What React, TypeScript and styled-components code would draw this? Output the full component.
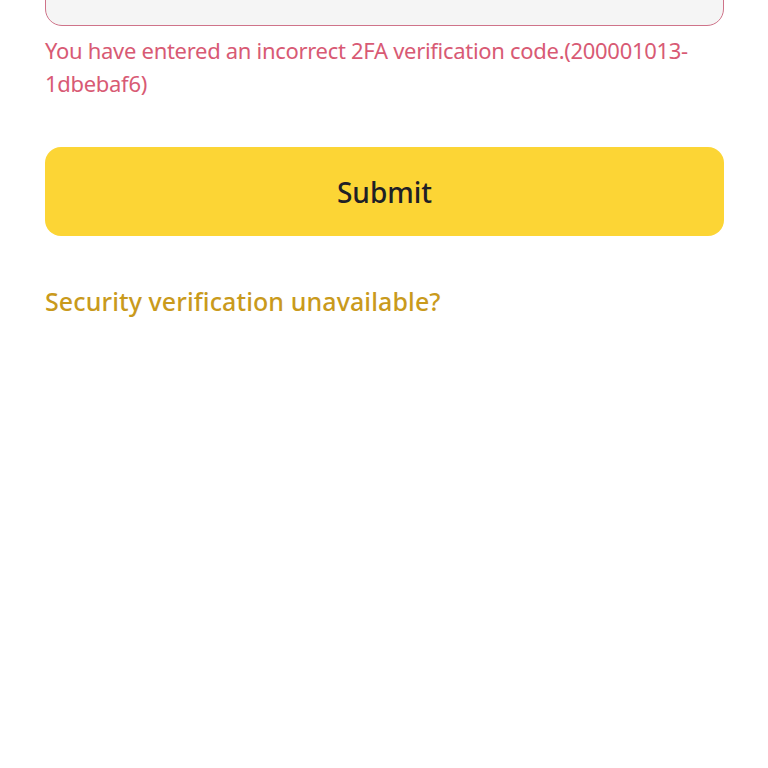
import styled, { createGlobalStyle } from "styled-components";

const GlobalStyle = createGlobalStyle`
  html, body {
    margin: 0;
    padding: 0;
    background: #ffffff;
    overflow: hidden;
  }
  body {
    font-family: "Noto Sans", "Open Sans", sans-serif;
  }
`;

const Page = styled.div`
  width: 768px;
  height: 768px;
  box-sizing: border-box;
  padding: 0 44px 0 45px;
  display: flex;
  flex-direction: column;
`;

const CodeInput = styled.input`
  box-sizing: border-box;
  height: 80px;
  margin-top: -54px;
  width: 100%;
  border: 1.5px solid #cf7389;
  border-radius: 17px;
  background: #f5f5f5;
  outline: none;
  font-family: inherit;
  font-size: 22px;
  padding: 0 20px;
`;

const ErrorText = styled.p`
  margin: 8px 0 0;
  font-size: 22px;
  line-height: 33px;
  color: #d85a74;
  letter-spacing: -0.3px;
`;

const SubmitButton = styled.button`
  margin-top: 47px;
  height: 89px;
  width: 100%;
  border: none;
  border-radius: 16px;
  background: #fcd535;
  color: #1e2026;
  font-family: inherit;
  font-size: 28px;
  font-weight: 500;
  cursor: pointer;
`;

const HelpLink = styled.a`
  margin-top: 47px;
  font-size: 25px;
  font-weight: 500;
  line-height: 36px;
  letter-spacing: 0.1px;
  color: #c99a1c;
  text-decoration: none;
  cursor: pointer;
`;

export default function App() {
  return (
    <>
      <GlobalStyle />
      <Page>
        <CodeInput aria-label="2FA code" />
        <ErrorText>
          You have entered an incorrect 2FA verification code.(200001013-1dbebaf6)
        </ErrorText>
        <SubmitButton>Submit</SubmitButton>
        <HelpLink>Security verification unavailable?</HelpLink>
      </Page>
    </>
  );
}
